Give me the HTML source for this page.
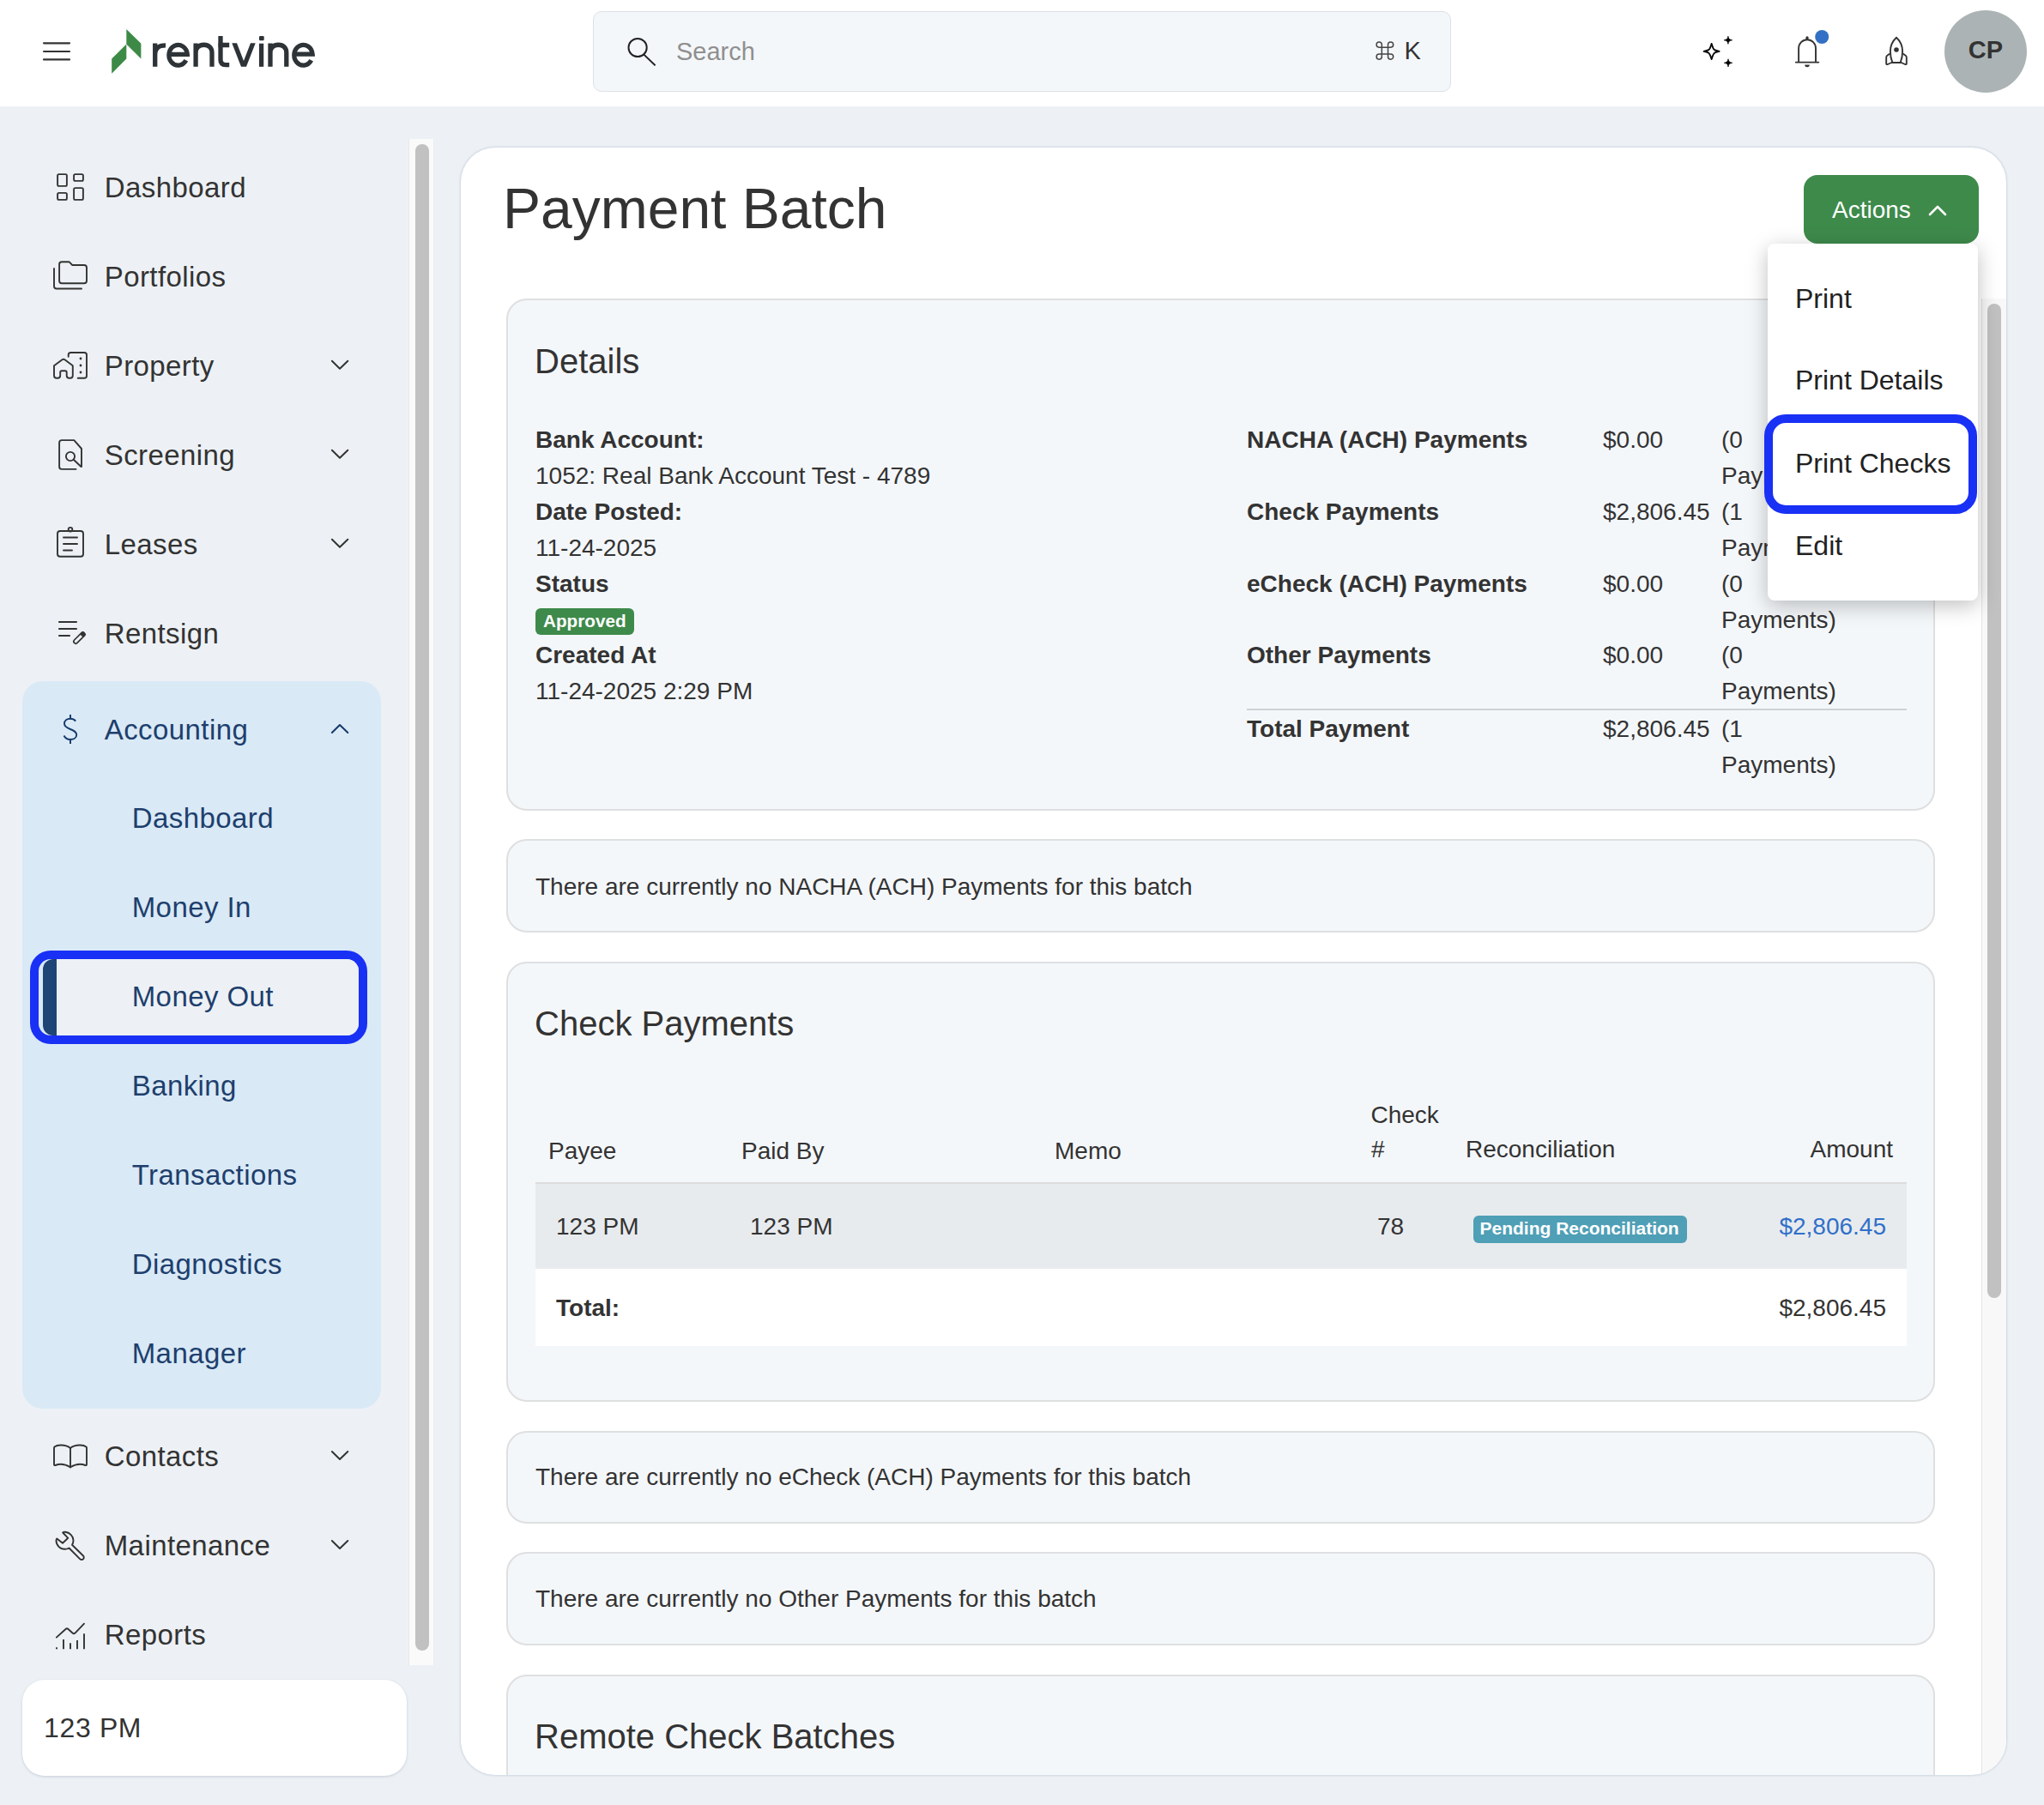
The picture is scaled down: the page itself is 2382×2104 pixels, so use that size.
<!DOCTYPE html>
<html><head><meta charset="utf-8">
<style>
*{box-sizing:border-box;margin:0;padding:0}
html,body{width:2382px;height:2104px;overflow:hidden;background:#edf1f5;font-family:"Liberation Sans",sans-serif;color:#333}
.a{position:absolute;white-space:nowrap;line-height:1}
#hdr{position:absolute;left:0;top:0;width:2382px;height:124px;background:#fff}
#search{position:absolute;left:691px;top:13px;width:1000px;height:94px;background:#f4f7fa;border:1.5px solid #dde1e5;border-radius:10px}
.nav{font-size:33px;color:#333;letter-spacing:0.42px;margin-left:-1.3px}
.sub{font-size:33px;color:#1e3f6d;letter-spacing:0.42px;margin-left:-1.3px}
#acct{position:absolute;left:26px;top:794px;width:418px;height:848px;background:#d9e9f6;border-radius:24px}
#sbtrack{position:absolute;left:476px;top:162px;width:30px;height:1779px;background:#fafafa;border-left:1.5px solid #e8e8e8;border-right:1.5px solid #ececec}
#sbthumb{position:absolute;left:484px;top:168px;width:16px;height:1756px;background:#c1c1c1;border-radius:8px}
#bcard{position:absolute;left:26px;top:1958px;width:448px;height:112px;background:#fff;border-radius:26px;box-shadow:0 1px 3px rgba(120,140,170,.35)}
#main{position:absolute;left:537px;top:172px;width:1801px;height:1897px;background:#fff;border-radius:40px;box-shadow:0 0 3px rgba(100,120,160,.45);overflow:hidden}
.card{position:absolute;left:53px;width:1665px;background:#f4f7fa;border:2px solid #dedfe0;border-radius:24px}
</style></head><body>
<div id="hdr">
  <svg class="a" style="left:48px;top:46px" width="36" height="28" viewBox="0 0 36 28"><g stroke="#333" stroke-width="2.2" stroke-linecap="round"><line x1="3" y1="4.3" x2="33" y2="4.3"/><line x1="3" y1="14" x2="33" y2="14"/><line x1="3" y1="23.4" x2="33" y2="23.4"/></g></svg>
  <svg class="a" style="left:128px;top:32px" width="40" height="56" viewBox="128 32 40 56"><polygon fill="#3d8a47" points="147.3,34.1 164.4,50.8 164.4,68.6 147.3,51.6"/><polygon fill="#3d8a47" points="130.2,68.6 147.3,51.6 147.3,68.6 130.2,85.7"/></svg>
  <svg class="a" style="left:170px;top:36px" width="205" height="48" viewBox="170 36 205 48"><g fill="none" stroke="#2d3336" stroke-width="5.3"><path d="M180.7,77.7 L180.7,50.4 M180.7,64 C180.7,56 185,52.8 193,52.8"/><path d="M196.85,63.3 L218.25,63.3 A10.7,11.85 0 1 0 216.8,70.3"/><path d="M228.1,77.7 L228.1,50.4 M228.1,61.5 C228.1,55.5 232,52.25 237.6,52.25 C243.2,52.25 247,55.5 247,61.5 L247,77.7"/><path d="M257,41.9 L257,69.5 Q257,75.6 263,75.6 L267.2,75.6 M254.2,52.5 L267.2,52.5"/><path d="M304.6,77.8 L304.6,50.7"/><path d="M315,77.8 L315,50.4 M315,61.5 C315,55.5 318.8,52.25 324.4,52.25 C330,52.25 333.8,55.5 333.8,61.5 L333.8,77.8"/><path d="M342.75,63.2 L364.15,63.2 A10.7,11.85 0 1 0 362.7,70.3"/></g><polygon points="270.3,50.3 276,50.3 284,71 292,50.3 297.7,50.3 287,77.7 281,77.7" fill="#2d3336"/><rect x="302" y="42" width="5.7" height="5.3" rx="1.3" fill="#2d3336"/></svg>
  <div id="search">
    <svg class="a" style="left:36px;top:28px" width="40" height="40" viewBox="728 41 40 40"><circle cx="743.1" cy="54.5" r="10.6" fill="none" stroke="#222" stroke-width="2"/><line x1="750.4" y1="62.6" x2="763.6" y2="75.3" stroke="#222" stroke-width="2"/></svg>
    <div class="a" style="left:96px;top:32px;font-size:29px;color:#8f8f8f">Search</div>
    <svg class="a" style="left:906px;top:30px" width="30" height="30" viewBox="1598.5 44.5 30 30"><path d="M1610.8,66.6 L1610.8,52.6 A3.1,3.1 0 1 0 1607.7,55.7 L1621.1,55.7 A3.1,3.1 0 1 0 1618,52.6 L1618,66.6 A3.1,3.1 0 1 0 1621.1,63.5 L1607.7,63.5 A3.1,3.1 0 1 0 1610.8,66.6 Z" fill="none" stroke="#444" stroke-width="1.5"/></svg><div class="a" style="left:944.5px;top:30.5px;font-size:29px;color:#333">K</div>
  </div>
  <svg class="a" style="left:1975px;top:30px" width="60" height="60" viewBox="0 0 60 60"><path d="M19.6,21 C20.8,25 21.5,27.3 23,28.2 C24.5,29 26.5,29.5 28.6,29.9 C26.5,30.3 24.5,30.9 23,31.7 C21.5,32.6 20.8,35 19.6,39 C18.4,35 17.7,32.6 16.2,31.7 C14.7,30.9 12.7,30.3 10.6,29.9 C12.7,29.5 14.7,29 16.2,28.2 C17.7,27.3 18.4,25 19.6,21 Z" fill="none" stroke="#000" stroke-width="1.9" stroke-linejoin="round"/><path d="M38.9,12.3 C39.5,15 40,16 43.6,16.8 C40,17.5 39.5,18.5 38.9,21.3 C38.3,18.5 37.8,17.5 34.2,16.8 C37.8,16 38.3,15 38.9,12.3 Z" fill="#000" stroke="#000" stroke-width="0.8" stroke-linejoin="round"/><path d="M39,38.8 C39.6,41.5 40.1,42.5 43.7,43.3 C40.1,44 39.6,45 39,47.8 C38.4,45 37.9,44 34.3,43.3 C37.9,42.5 38.4,41.5 39,38.8 Z" fill="#000" stroke="#000" stroke-width="0.8" stroke-linejoin="round"/></svg>
  <svg class="a" style="left:2080px;top:30px" width="60" height="60" viewBox="0 0 60 60"><path d="M16.1,42.5 L16.1,26.2 A9.95,10 0 0 1 36,26.2 L36,42.5" fill="none" stroke="#333" stroke-width="1.9"/><line x1="12.8" y1="42.6" x2="39.3" y2="42.6" stroke="#333" stroke-width="1.9" stroke-linecap="round"/><rect x="24.4" y="12.2" width="3.2" height="4.5" rx="1.6" fill="#333"/><path d="M23.2,45.4 L28.8,45.4 A2.8,2.8 0 0 1 23.2,45.4 Z" fill="#333"/><circle cx="43.2" cy="13" r="8" fill="#3370c5"/></svg>
  <svg class="a" style="left:2180px;top:30px" width="60" height="60" viewBox="0 0 60 60"><path d="M25.3,42.8 C23.6,38.5 22.9,34 22.9,30 C22.9,23.5 25.5,18 30,13.8 C34.5,18 37.1,23.5 37.1,30 C37.1,34 36.4,38.5 34.7,42.8" fill="none" stroke="#333" stroke-width="1.9" stroke-linejoin="round"/><path d="M22.4,32.6 L19.3,34.8 Q18.2,35.6 18.2,37 L18.2,44 Q18.2,45.6 19.8,45 L24.3,43 L35.7,43 L40.2,45 Q41.8,45.6 41.8,44 L41.8,37 Q41.8,35.6 40.7,34.8 L37.6,32.6" fill="none" stroke="#333" stroke-width="1.9" stroke-linejoin="round"/><circle cx="30" cy="28" r="2.8" fill="#333"/></svg>
  <div class="a" style="left:2266px;top:12px;width:96px;height:96px;border-radius:50%;background:#abb3b5"></div>
  <div class="a" style="left:2266px;top:44px;width:96px;text-align:center;font-size:29px;font-weight:bold;color:#333">CP</div>
</div>
<!-- sidebar -->
<div class="a nav" style="left:123px;top:202px">Dashboard</div>
<div class="a nav" style="left:123px;top:306px">Portfolios</div>
<div class="a nav" style="left:123px;top:410px">Property</div>
<div class="a nav" style="left:123px;top:514px">Screening</div>
<div class="a nav" style="left:123px;top:618px">Leases</div>
<div class="a nav" style="left:123px;top:722px">Rentsign</div>
<div id="acct"></div>
<div class="a sub" style="left:123px;top:834px">Accounting</div>
<div class="a sub" style="left:155px;top:937px">Dashboard</div>
<div class="a sub" style="left:155px;top:1041px">Money In</div>
<div class="a" style="left:35px;top:1108px;width:393px;height:109px;border-radius:24px;background:#1930f5"></div>
<div class="a" style="left:45px;top:1118px;width:373px;height:89px;border-radius:14px;background:#d9e9f6;overflow:hidden"><div style="position:absolute;left:5px;top:0;width:380px;height:89px;background:#edf1f5;border-left:16px solid #1f4476;border-radius:12px 0 0 12px"></div></div>
<div class="a sub" style="left:155px;top:1145px">Money Out</div>
<div class="a sub" style="left:155px;top:1249px">Banking</div>
<div class="a sub" style="left:155px;top:1353px">Transactions</div>
<div class="a sub" style="left:155px;top:1457px">Diagnostics</div>
<div class="a sub" style="left:155px;top:1561px">Manager</div>
<div class="a nav" style="left:123px;top:1681px">Contacts</div>
<div class="a nav" style="left:123px;top:1785px">Maintenance</div>
<div class="a nav" style="left:123px;top:1889px">Reports</div>
<svg class="a" style="left:55px;top:188px" width="60" height="60" viewBox="0 0 60 60"><g fill="none" stroke="#333" stroke-width="1.9" stroke-linecap="round" stroke-linejoin="round"><rect x="12.1" y="15.1" width="10.8" height="13.8" rx="1.6"/><rect x="31.1" y="15.1" width="10.8" height="7.8" rx="1.6"/><rect x="12.1" y="36.9" width="10.8" height="8" rx="1.6"/><rect x="31.1" y="31.1" width="10.8" height="13.8" rx="1.6"/></g></svg>
<svg class="a" style="left:55px;top:295px" width="60" height="60" viewBox="0 0 60 60"><g fill="none" stroke="#333" stroke-width="1.9" stroke-linecap="round" stroke-linejoin="round"><path d="M14.1,13 Q14.1,10.2 17,10.2 L25.5,10.2 L29.3,14 L43,14 Q46,14 46,17 L46,32.2 Q46,35.2 43,35.2 L17,35.2 Q14.1,35.2 14.1,32.2 Z"/><path d="M8,18 L8,38.5 Q8,41.5 11,41.5 L40,41.5"/></g></svg>
<svg class="a" style="left:55px;top:400px" width="60" height="60" viewBox="0 0 60 60"><g fill="none" stroke="#333" stroke-width="1.9" stroke-linecap="round" stroke-linejoin="round"><path d="M8,26.3 L17.5,19.3 Q19,18.3 20.5,19.3 L29.8,26.3 L29.8,37.8 Q29.8,40.8 26.8,40.8 L25.7,40.8 Q22.7,40.8 22.7,37.8 L22.7,34 Q22.7,32.2 21,32.2 L17,32.2 Q15.2,32.2 15.2,34 L15.2,37.8 Q15.2,40.8 12.2,40.8 L11,40.8 Q8,40.8 8,37.8 Z"/><path d="M24.7,15.7 L24.7,13.8 Q24.7,11 27.5,11 L43.2,11 Q46,11 46,13.8 L46,38 Q46,40.8 43.2,40.8 L35.7,40.8"/><circle cx="39" cy="18" r="1.4" fill="#333" stroke="none"/><circle cx="39" cy="26" r="1.4" fill="#333" stroke="none"/><circle cx="39" cy="34" r="1.4" fill="#333" stroke="none"/></g></svg>
<svg class="a" style="left:55px;top:505px" width="60" height="60" viewBox="0 0 60 60"><g fill="none" stroke="#333" stroke-width="1.9" stroke-linecap="round" stroke-linejoin="round"><path d="M33.5,41.9 L17,41.9 Q14.1,41.9 14.1,39 L14.1,11 Q14.1,8.1 17,8.1 L31.3,8.1 L40,18 L40,38.8"/><circle cx="27" cy="27" r="5.1"/><path d="M30.8,30.8 L39.5,39"/></g></svg>
<svg class="a" style="left:55px;top:610px" width="60" height="60" viewBox="0 0 60 60"><g fill="none" stroke="#333" stroke-width="1.9" stroke-linecap="round" stroke-linejoin="round"><rect x="12" y="9" width="30" height="29.8" rx="3"/><circle cx="27" cy="7.2" r="2.3"/><path d="M19,16.5 L35,16.5 M19,24 L35,24 M19,31.5 L29,31.5"/></g></svg>
<svg class="a" style="left:55px;top:710px" width="60" height="60" viewBox="0 0 60 60"><g fill="none" stroke="#333" stroke-width="1.9" stroke-linecap="round" stroke-linejoin="round"><path d="M13.2,15 L34.8,15 M13.2,23 L34.8,23 M13.2,31 L26.8,31" stroke-linecap="butt"/><g transform="translate(37.4,33.6) rotate(-45)"><rect x="-8.2" y="-2.4" width="16.4" height="4.8" rx="2.4" stroke-width="1.7"/><rect x="3.6" y="-2.6" width="4.8" height="5.2" fill="#333" stroke="none"/></g></g></svg>
<svg class="a" style="left:55px;top:820px" width="60" height="60" viewBox="0 0 60 60"><g fill="none" stroke="#14396a" stroke-width="1.9"><path d="M27,13 L27,17.6 M27,42.3 L27,47" stroke-linecap="butt"/><path d="M33.2,20.5 C31.5,18.6 29.5,17.8 27,17.8 C23,17.8 20,20 20,23.5 C20,27 23,28.5 27,30 C31,31.5 34.2,33 34.2,36.5 C34.2,40 31,42 27,42 C23.5,42 21,40.5 19.5,37.5" stroke-linecap="butt"/></g></svg>
<svg class="a" style="left:55px;top:1668px" width="60" height="60" viewBox="0 0 60 60"><g fill="none" stroke="#333" stroke-width="1.9" stroke-linecap="round" stroke-linejoin="round"><path d="M27,20 C24,17.5 20,16.5 16,16.5 C12.5,16.5 10,17.3 8.5,18.5 Q8,19 8,20 L8,39 Q8,40.5 9.5,40 C11.5,39.2 13.5,38.8 16,38.8 C20,38.8 24,40.5 27,42.3"/><path d="M27,20 C30,17.5 34,16.5 38,16.5 C41.5,16.5 44,17.3 45.5,18.5 Q46,19 46,20 L46,39 Q46,40.5 44.5,40 C42.5,39.2 40.5,38.8 38,38.8 C34,38.8 30,40.5 27,42.3"/><path d="M27,20 L27,42.3"/></g></svg>
<svg class="a" style="left:55px;top:1772px" width="60" height="60" viewBox="0 0 60 60"><g fill="none" stroke="#333" stroke-width="1.9" stroke-linecap="round" stroke-linejoin="round"><path d="M11.3,21.5 L18,26.8 L24.3,20.8 L18.2,14.5 C19,13.8 20,13.7 21,13.8 C26.5,14.3 30.5,18.8 30.5,23.5 C30.5,25.5 30,27.3 29,28.8 L42,41.5 C43,42.5 43,44.5 42,45.3 C41,46.3 39.3,46.3 38.3,45.3 L25.5,32.5 C24,33.3 22.3,33.8 20.5,33.8 C15,33.8 10.5,29.3 10.5,23.8 C10.5,22.8 10.7,22 11.3,21.5 Z"/></g></svg>
<svg class="a" style="left:55px;top:1876px" width="60" height="60" viewBox="0 0 60 60"><g fill="none" stroke="#333" stroke-width="1.9" stroke-linecap="round" stroke-linejoin="round"><path d="M10.8,32.6 L21.5,23 Q23,21.6 24.5,23 L29.8,27.8 Q31,28.8 32.5,27.6 L43,16.7"/><path d="M11,44.3 L11,46.3 M19,35 L19,46.3 M27,39.2 L27,46.3 M35,36 L35,46.3 M43,28.2 L43,46.3" stroke-linecap="butt"/></g></svg>
<svg class="a" style="left:0;top:0;overflow:visible" width="1" height="1"><path d="M386.9,420.7 L396,429.7 L405.3,420.7" fill="none" stroke="#333" stroke-width="2" stroke-linecap="round" stroke-linejoin="round"/></svg>
<svg class="a" style="left:0;top:0;overflow:visible" width="1" height="1"><path d="M386.9,524.7 L396,533.7 L405.3,524.7" fill="none" stroke="#333" stroke-width="2" stroke-linecap="round" stroke-linejoin="round"/></svg>
<svg class="a" style="left:0;top:0;overflow:visible" width="1" height="1"><path d="M386.9,628.7 L396,637.7 L405.3,628.7" fill="none" stroke="#333" stroke-width="2" stroke-linecap="round" stroke-linejoin="round"/></svg>
<svg class="a" style="left:0;top:0;overflow:visible" width="1" height="1"><path d="M386.9,1692.0 L396,1701.0 L405.3,1692.0" fill="none" stroke="#333" stroke-width="2" stroke-linecap="round" stroke-linejoin="round"/></svg>
<svg class="a" style="left:0;top:0;overflow:visible" width="1" height="1"><path d="M386.9,1796.0 L396,1805.0 L405.3,1796.0" fill="none" stroke="#333" stroke-width="2" stroke-linecap="round" stroke-linejoin="round"/></svg>
<svg class="a" style="left:0;top:0;overflow:visible" width="1" height="1"><path d="M386.9,854.0 L396,845.0 L405.3,854.0" fill="none" stroke="#14396a" stroke-width="2" stroke-linecap="round" stroke-linejoin="round"/></svg>
<div id="sbtrack"></div><div id="sbthumb"></div>
<div id="bcard"><div class="a" style="left:25px;top:40px;font-size:32px;letter-spacing:0.65px">123 PM</div></div>
<!-- main -->
<div id="main">
  <div class="card" style="top:176px;height:597px"></div>
  <div class="card" style="top:806px;height:109px"></div>
  <div class="card" style="top:949px;height:513px"></div>
  <div class="card" style="top:1496px;height:108px"></div>
  <div class="card" style="top:1637px;height:109px"></div>
  <div class="card" style="top:1780px;height:200px"></div>
  <div class="a" style="left:49px;top:38.3px;font-size:66px;">Payment Batch</div>
  <div class="a" style="left:86px;top:228.6px;font-size:40px;">Details</div>
  <div class="a" style="left:87px;top:327.3px;font-size:28px;font-weight:bold;">Bank Account:</div>
  <div class="a" style="left:87px;top:369.3px;font-size:28px;">1052: Real Bank Account Test - 4789</div>
  <div class="a" style="left:87px;top:411.3px;font-size:28px;font-weight:bold;">Date Posted:</div>
  <div class="a" style="left:87px;top:453.3px;font-size:28px;">11-24-2025</div>
  <div class="a" style="left:87px;top:495.3px;font-size:28px;font-weight:bold;">Status</div>
  <div class="a" style="left:87px;top:537px;width:115px;height:31px;background:#3e8a4b;border-radius:6px"></div>
  <div class="a" style="left:96px;top:542.2px;font-size:20.7px;font-weight:bold;color:#fff;">Approved</div>
  <div class="a" style="left:87px;top:578.3px;font-size:28px;font-weight:bold;">Created At</div>
  <div class="a" style="left:87px;top:620.3px;font-size:28px;">11-24-2025 2:29 PM</div>
  <div class="a" style="left:916px;top:327.3px;font-size:28px;font-weight:bold;">NACHA (ACH) Payments</div>
  <div class="a" style="left:1331px;top:327.3px;font-size:28px;">$0.00</div>
  <div class="a" style="left:1469px;top:327.3px;font-size:28px;">(0</div>
  <div class="a" style="left:1469px;top:369.3px;font-size:28px;">Payments)</div>
  <div class="a" style="left:916px;top:411.3px;font-size:28px;font-weight:bold;">Check Payments</div>
  <div class="a" style="left:1331px;top:411.3px;font-size:28px;">$2,806.45</div>
  <div class="a" style="left:1469px;top:411.3px;font-size:28px;">(1</div>
  <div class="a" style="left:1469px;top:453.3px;font-size:28px;">Payments)</div>
  <div class="a" style="left:916px;top:495.3px;font-size:28px;font-weight:bold;">eCheck (ACH) Payments</div>
  <div class="a" style="left:1331px;top:495.3px;font-size:28px;">$0.00</div>
  <div class="a" style="left:1469px;top:495.3px;font-size:28px;">(0</div>
  <div class="a" style="left:1469px;top:537.3px;font-size:28px;">Payments)</div>
  <div class="a" style="left:916px;top:578.3px;font-size:28px;font-weight:bold;">Other Payments</div>
  <div class="a" style="left:1331px;top:578.3px;font-size:28px;">$0.00</div>
  <div class="a" style="left:1469px;top:578.3px;font-size:28px;">(0</div>
  <div class="a" style="left:1469px;top:620.3px;font-size:28px;">Payments)</div>
  <div class="a" style="left:916px;top:664.3px;font-size:28px;font-weight:bold;">Total Payment</div>
  <div class="a" style="left:1331px;top:664.3px;font-size:28px;">$2,806.45</div>
  <div class="a" style="left:1469px;top:664.3px;font-size:28px;">(1</div>
  <div class="a" style="left:1469px;top:706.3px;font-size:28px;">Payments)</div>
  <div class="a" style="left:916px;top:654px;width:769px;height:2px;background:#cfd2d5"></div>
  <div class="a" style="left:87px;top:848.3px;font-size:28px;">There are currently no NACHA (ACH) Payments for this batch</div>
  <div class="a" style="left:86px;top:1001.1px;font-size:40px;">Check Payments</div>
  <div class="a" style="left:87px;top:1206px;width:1598px;height:2px;background:#dcdcdc"></div>
  <div class="a" style="left:87px;top:1208px;width:1598px;height:99px;background:#e8ebee"></div>
  <div class="a" style="left:87px;top:1307px;width:1598px;height:90px;background:#fff"></div>
  <div class="a" style="left:102.0px;top:1156.3px;font-size:28px;">Payee</div>
  <div class="a" style="left:327.0px;top:1156.3px;font-size:28px;">Paid By</div>
  <div class="a" style="left:692.0px;top:1156.3px;font-size:28px;">Memo</div>
  <div class="a" style="left:1060.5px;top:1113.8px;font-size:28px;">Check</div>
  <div class="a" style="left:1061px;top:1154.3px;font-size:28px;">#</div>
  <div class="a" style="left:1171.0px;top:1154.3px;font-size:28px;">Reconciliation</div>
  <div class="a" style="right:132.0px;top:1154.3px;font-size:28px;">Amount</div>
  <div class="a" style="left:111.0px;top:1244.3px;font-size:28px;">123 PM</div>
  <div class="a" style="left:337.0px;top:1244.3px;font-size:28px;">123 PM</div>
  <div class="a" style="left:1068px;top:1244.3px;font-size:28px;">78</div>
  <div class="a" style="left:1180px;top:1245px;width:249px;height:32px;background:#4f9fb6;border-radius:6px"></div>
  <div class="a" style="left:1187.5px;top:1249.2px;font-size:21px;font-weight:bold;color:#fff;">Pending Reconciliation</div>
  <div class="a" style="right:140.0px;top:1244.3px;font-size:28px;color:#3070c9;">$2,806.45</div>
  <div class="a" style="left:111.0px;top:1338.8px;font-size:28px;font-weight:bold;">Total:</div>
  <div class="a" style="right:140.0px;top:1338.8px;font-size:28px;">$2,806.45</div>
  <div class="a" style="left:87px;top:1536.3px;font-size:28px;">There are currently no eCheck (ACH) Payments for this batch</div>
  <div class="a" style="left:87px;top:1678.3px;font-size:28px;">There are currently no Other Payments for this batch</div>
  <div class="a" style="left:86px;top:1832px;font-size:40px;">Remote Check Batches</div>
  <div class="a" style="left:1772px;top:176px;width:29px;height:1760px;background:#f8f8f8;border-left:1px solid #e4e4e4"></div>
  <div class="a" style="left:1779px;top:182px;width:16px;height:1159px;background:#c1c1c1;border-radius:8px"></div>
  <div class="a" style="left:1565px;top:32px;width:204px;height:80px;background:#3e8a4b;border-radius:16px"></div>
  <div class="a" style="left:1598.0px;top:58.8px;font-size:28px;color:#fff;">Actions</div>
  <svg class="a" style="left:1709px;top:64px" width="24" height="18" viewBox="2246 236 24 18"><path d="M2249,250 L2258,241 L2267,250" fill="none" stroke="#fff" stroke-width="2.6" stroke-linecap="round" stroke-linejoin="round"/></svg>
</div>

<div class="a" style="left:2060px;top:284px;width:245px;height:416px;background:#fff;border-radius:8px;box-shadow:0 6px 24px rgba(0,0,0,.25)"></div>
<div class="a" style="left:2092px;top:331.9px;font-size:32px;color:#222">Print</div>
<div class="a" style="left:2092px;top:427.4px;font-size:32px;color:#222">Print Details</div>
<div class="a" style="left:2092px;top:523.6px;font-size:32px;color:#222">Print Checks</div>
<div class="a" style="left:2092px;top:619.9px;font-size:32px;color:#222">Edit</div>
<div class="a" style="left:2056px;top:483px;width:248px;height:116px;border:10px solid #1930f5;border-radius:25px"></div>
</body></html>
